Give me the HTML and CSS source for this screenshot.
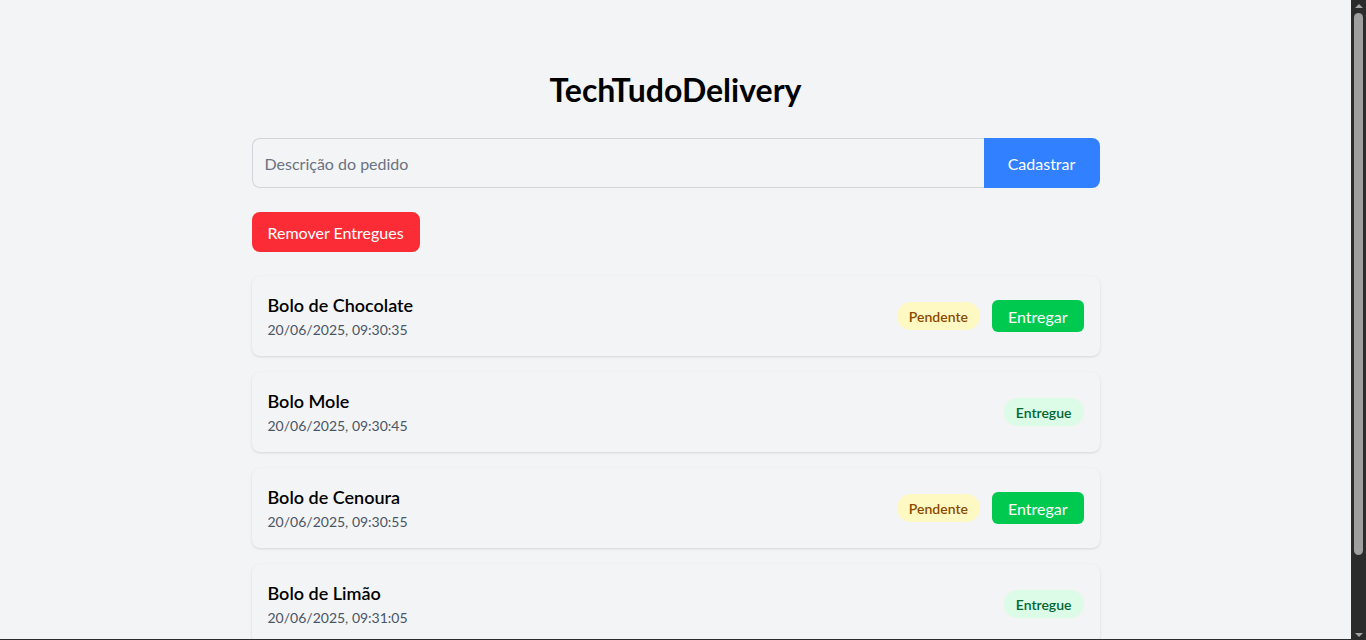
FILE: index.html
```html
<!DOCTYPE html>
<html lang="pt-BR">
<head>
<meta charset="utf-8">
<title>TechTudoDelivery</title>
<link rel="stylesheet" href="styles.css">
</head>
<body>
<main class="app">
  <h1 class="title">TechTudoDelivery</h1>
  <form class="new-order" onsubmit="return false">
    <input class="new-order__input" type="text" placeholder="Descrição do pedido">
    <button class="new-order__btn" type="submit">Cadastrar</button>
  </form>
  <div class="toolbar">
    <button class="btn-remove" type="button">Remover Entregues</button>
  </div>
  <ul class="orders">
    <li class="order">
      <div class="order__info">
        <span class="order__name">Bolo de Chocolate</span>
        <span class="order__date">20/06/2025, 09:30:35</span>
      </div>
      <div class="order__actions">
        <span class="badge badge--pending">Pendente</span>
        <button class="btn-deliver" type="button">Entregar</button>
      </div>
    </li>
    <li class="order">
      <div class="order__info">
        <span class="order__name">Bolo Mole</span>
        <span class="order__date">20/06/2025, 09:30:45</span>
      </div>
      <div class="order__actions">
        <span class="badge badge--done">Entregue</span>
      </div>
    </li>
    <li class="order">
      <div class="order__info">
        <span class="order__name">Bolo de Cenoura</span>
        <span class="order__date">20/06/2025, 09:30:55</span>
      </div>
      <div class="order__actions">
        <span class="badge badge--pending">Pendente</span>
        <button class="btn-deliver" type="button">Entregar</button>
      </div>
    </li>
    <li class="order">
      <div class="order__info">
        <span class="order__name">Bolo de Limão</span>
        <span class="order__date">20/06/2025, 09:31:05</span>
      </div>
      <div class="order__actions">
        <span class="badge badge--done">Entregue</span>
      </div>
    </li>
  </ul>
</main>
<div class="scrollbar" aria-hidden="true">
  <span class="scrollbar__btn scrollbar__btn--up"></span>
  <div class="scrollbar__track"><span class="scrollbar__thumb"></span></div>
  <span class="scrollbar__btn scrollbar__btn--down"></span>
</div>
<div class="hscroll-edge" aria-hidden="true"></div>
</body>
</html>
```

FILE: styles.css
```css
* { box-sizing: border-box; }

html, body {
  margin: 0;
  padding: 0;
  background: #f3f4f6;
}

body {
  padding-right: 15px;
  font-family: "Segoe UI", Lato, "Noto Sans", sans-serif;
  color: #000;
}

/* classic scrollbar look */
.scrollbar {
  position: fixed;
  top: 0;
  right: 0;
  width: 15px;
  height: 100vh;
  display: flex;
  flex-direction: column;
  background: #2b2b2b;
}

.scrollbar__btn {
  flex: 0 0 13px;
  display: flex;
  align-items: center;
  justify-content: center;
}

.scrollbar__btn::before {
  content: "";
  width: 0;
  height: 0;
  border-left: 4px solid transparent;
  border-right: 4px solid transparent;
}

.scrollbar__btn--up::before {
  border-bottom: 4px solid #a3a3a3;
  margin-top: -2px;
}

.scrollbar__btn--down::before {
  border-top: 4px solid #a3a3a3;
  margin-top: 2px;
}

.scrollbar__track {
  flex: 1;
  padding: 0 3px;
}

.scrollbar__thumb {
  display: block;
  height: 542px;
  background: #9f9f9f;
  border-radius: 5px;
}

.hscroll-edge {
  position: fixed;
  left: 0;
  right: 0;
  bottom: 0;
  height: 1px;
  background: #2b2b2b;
}

.app {
  width: 848px;
  margin: 0 auto;
  padding: 72px 0 72px;
}

.title {
  margin: 0 0 30px;
  font-size: 32px;
  line-height: 36px;
  font-weight: 700;
  text-align: center;
}

.new-order {
  display: flex;
  margin: 0 0 24px;
}

.new-order__input {
  flex: 1;
  min-width: 0;
  height: 50px;
  padding: 12px;
  font: inherit;
  font-size: 16px;
  line-height: 24px;
  color: #111827;
  background: #f3f4f6;
  border: 1px solid #d1d5db;
  border-right: none;
  border-radius: 8px 0 0 8px;
  outline: none;
}

.new-order__input::placeholder { color: #6b7280; }

.new-order__btn {
  width: 116px;
  height: 50px;
  padding: 0 16px;
  font: inherit;
  font-size: 16px;
  color: #fff;
  background: #3080ff;
  border: none;
  border-radius: 0 8px 8px 0;
  cursor: pointer;
}

.toolbar {
  display: flex;
  margin: 0 0 24px;
}

.btn-remove {
  height: 40px;
  padding: 0 16px;
  font: inherit;
  font-size: 16px;
  color: #fff;
  background: #fb2c36;
  border: none;
  border-radius: 8px;
  cursor: pointer;
}

.orders {
  list-style: none;
  margin: 0;
  padding: 0;
  display: flex;
  flex-direction: column;
  gap: 16px;
}

.order {
  display: flex;
  align-items: center;
  justify-content: space-between;
  padding: 16px;
  background: #f3f4f6;
  border-radius: 8px;
  box-shadow: 0 1px 3px rgba(0, 0, 0, 0.1), 0 1px 2px -1px rgba(0, 0, 0, 0.1);
}

.order__info {
  display: flex;
  flex-direction: column;
}

.order__name {
  font-size: 18px;
  line-height: 27px;
  font-weight: 600;
}

.order__date {
  font-size: 14px;
  line-height: 21px;
  color: #4a5565;
}

.order__actions {
  display: flex;
  align-items: center;
  gap: 12px;
}

.badge {
  display: inline-flex;
  align-items: center;
  height: 28px;
  padding: 0 12px;
  font-size: 14px;
  font-weight: 600;
  border-radius: 9999px;
}

.badge--pending {
  color: #894b00;
  background: #fef9c2;
}

.badge--done {
  color: #016630;
  background: #dcfce7;
}

.btn-deliver {
  height: 32px;
  padding: 0 16px;
  font: inherit;
  font-size: 16px;
  color: #fff;
  background: #00c950;
  border: none;
  border-radius: 6px;
  cursor: pointer;
}
```
